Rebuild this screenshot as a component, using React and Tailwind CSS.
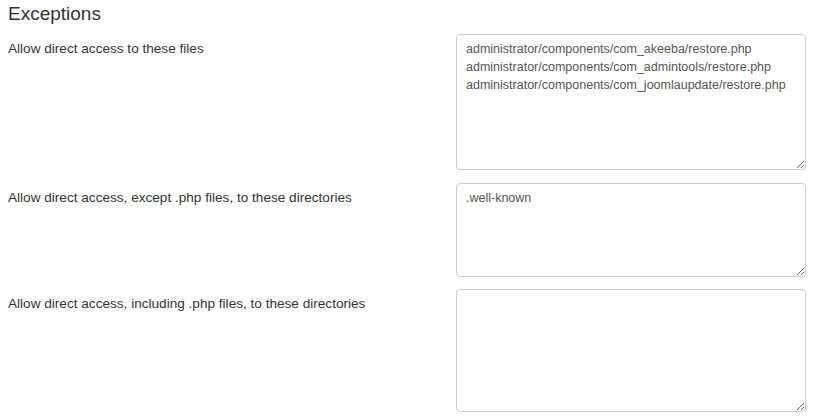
const rows = [
  {
    label: 'Allow direct access to these files',
    value:
      'administrator/components/com_akeeba/restore.php\nadministrator/components/com_admintools/restore.php\nadministrator/components/com_joomlaupdate/restore.php',
    h: 'h-[136px]',
    mt: 'mt-[6px]',
  },
  {
    label: 'Allow direct access, except .php files, to these directories',
    value: '.well-known',
    h: 'h-[94px]',
    mt: 'mt-[13px]',
  },
  {
    label: 'Allow direct access, including .php files, to these directories',
    value: '',
    h: 'h-[123px]',
    mt: 'mt-[12px]',
  },
];

export default function App() {
  return (
    <div
      className="min-h-screen bg-white px-2 text-[#333]"
      style={{ fontFamily: '"Liberation Sans", Arial, sans-serif' }}
    >
      <h3 className="text-[19px] leading-[28px]">Exceptions</h3>
      {rows.map((r) => (
        <div key={r.label} className={`${r.mt} flex`}>
          <label className="w-[448px] shrink-0 pt-[6px] text-[13.6px] leading-[18px]">
            {r.label}
          </label>
          <textarea
            defaultValue={r.value}
            className={`${r.h} w-[350px] resize-y rounded-[4px] border border-[#ccc] bg-white px-[9px] py-[5px] text-[12.5px] leading-[18px] text-[#555] outline-none`}
          />
        </div>
      ))}
    </div>
  );
}
